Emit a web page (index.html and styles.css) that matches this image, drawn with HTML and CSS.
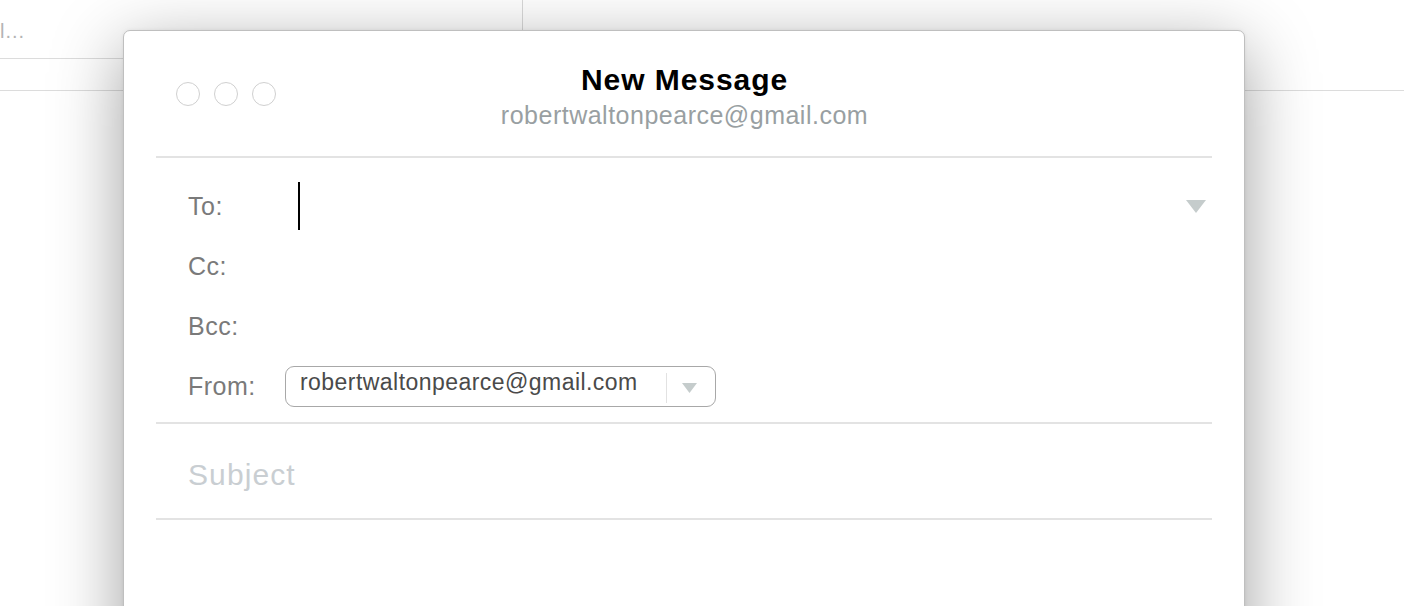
FILE: index.html
```html
<!DOCTYPE html>
<html>
<head>
<meta charset="utf-8">
<link rel="stylesheet" href="styles.css">
</head>
<body>
<div class="app">
  <div class="pane-left">
    <div class="search-row"><span class="search-text">l...</span></div>
    <div class="sub-row"></div>
  </div>
  <div class="pane-right">
    <div class="toolbar"></div>
  </div>
</div>

<div class="window">
  <div class="inner">
    <div class="header">
      <div class="lights">
        <span class="light"></span>
        <span class="light"></span>
        <span class="light"></span>
      </div>
      <div class="titles">
        <div class="title">New Message</div>
        <div class="account">robertwaltonpearce@gmail.com</div>
      </div>
      <div class="spacer"></div>
    </div>

    <div class="fields">
      <div class="field">
        <span class="label">To:</span>
        <span class="input"><span class="caret"></span></span>
        <svg class="to-arrow" width="20" height="13" viewBox="0 0 20 13"><path d="M0 0H20L10 13Z" fill="#c5cccc"/></svg>
      </div>
      <div class="field">
        <span class="label">Cc:</span>
        <span class="input"></span>
        <span></span>
      </div>
      <div class="field">
        <span class="label">Bcc:</span>
        <span class="input"></span>
        <span></span>
      </div>
      <div class="field">
        <span class="label">From:</span>
        <div class="popup">
          <span class="popup-text">robertwaltonpearce@gmail.com</span>
          <span class="popup-divider"></span>
          <span class="popup-arrow">
            <svg width="15" height="10" viewBox="0 0 15 10"><path d="M0 0H15L7.5 10Z" fill="#c5cccc"/></svg>
          </span>
        </div>
        <span></span>
      </div>
    </div>

    <div class="subject">Subject</div>
    <div class="body"></div>
  </div>
</div>
</body>
</html>
```

FILE: styles.css
```css
html, body {
  margin: 0;
  padding: 0;
}
body {
  width: 1404px;
  height: 606px;
  overflow: hidden;
  background: #ffffff;
  font-family: "Liberation Sans", Arial, Helvetica, sans-serif;
  position: relative;
}

/* Background app */
.app {
  display: flex;
  height: 606px;
}
.pane-left {
  width: 522px;
  border-right: 1px solid #d9d9d9;
  display: flex;
  flex-direction: column;
}
.search-row {
  height: 59px;
  border-bottom: 1px solid #dcdcdc;
  display: flex;
  align-items: center;
  padding-top: 5px;
  box-sizing: border-box;
}
.search-text {
  font-size: 20px;
  color: #b4b4b4;
  letter-spacing: 1px;
}
.sub-row {
  height: 31px;
  border-bottom: 1px solid #dcdcdc;
}
.pane-right {
  flex: 1;
}
.toolbar {
  height: 90px;
  border-bottom: 1px solid #dcdcdc;
}

/* Compose window */
.window {
  position: absolute;
  left: 123px;
  top: 30px;
  width: 1122px;
  height: 640px;
  box-sizing: border-box;
  background: #ffffff;
  border: 1px solid #bfbfbf;
  border-radius: 7px 7px 0 0;
  box-shadow: 0 18px 70px rgba(0, 0, 0, 0.38), 0 0 4px rgba(0, 0, 0, 0.06);
}
.inner {
  padding: 0 32px;
}
.header {
  height: 127px;
  box-sizing: border-box;
  padding-top: 32px;
  border-bottom: 2px solid #e3e3e3;
  display: grid;
  grid-template-columns: 1fr auto 1fr;
  align-items: start;
}
.lights {
  display: flex;
  gap: 14px;
  padding-left: 20px;
  margin-top: 19px;
}
.light {
  width: 24px;
  height: 24px;
  box-sizing: border-box;
  border: 1px solid #d0d0d0;
  border-radius: 50%;
}
.titles {
  text-align: center;
  display: flex;
  flex-direction: column;
  gap: 3px;
  margin-left: 1px;
}
.title {
  font-size: 30px;
  line-height: 34px;
  font-weight: bold;
  color: #000000;
  letter-spacing: 0.95px;
}
.account {
  font-size: 25px;
  line-height: 30px;
  color: #999fa2;
  letter-spacing: 0.5px;
}

.fields {
  padding: 18px 0 6px;
  border-bottom: 2px solid #e3e3e3;
}
.field {
  display: grid;
  grid-template-columns: 97px 1fr auto;
  align-items: center;
  height: 60px;
  padding: 0 6px 0 32px;
}
.label {
  font-size: 25px;
  line-height: 60px;
  color: #7a7a7a;
  letter-spacing: 0.5px;
}
.input {
  display: flex;
  align-items: center;
}
.caret {
  margin-left: 13px;
  width: 2px;
  height: 48px;
  background: #000000;
}
.to-arrow {
  display: block;
  margin-top: 1px;
}

.popup {
  width: 431px;
  height: 41px;
  box-sizing: border-box;
  border: 1.5px solid #a8a8a8;
  border-radius: 9px;
  display: flex;
  align-items: stretch;
}
.popup-text {
  width: 380px;
  padding: 2px 0 0 14px;
  box-sizing: border-box;
  font-size: 23px;
  line-height: 26px;
  color: #4a4a4a;
  letter-spacing: 0.45px;
  white-space: nowrap;
}
.popup-divider {
  width: 1px;
  background: #e2e2e2;
  margin: 6px 0 3px;
}
.popup-arrow {
  flex: 1;
  display: flex;
  align-items: center;
  padding-left: 15px;
  padding-top: 3px;
}
.popup-arrow svg {
  display: block;
}

.subject {
  height: 96px;
  box-sizing: border-box;
  padding: 8px 0 0 32px;
  font-size: 30px;
  line-height: 86px;
  color: #c9ced2;
  letter-spacing: 1.1px;
  border-bottom: 2px solid #e3e3e3;
}
.body {
  height: 100px;
}
```
